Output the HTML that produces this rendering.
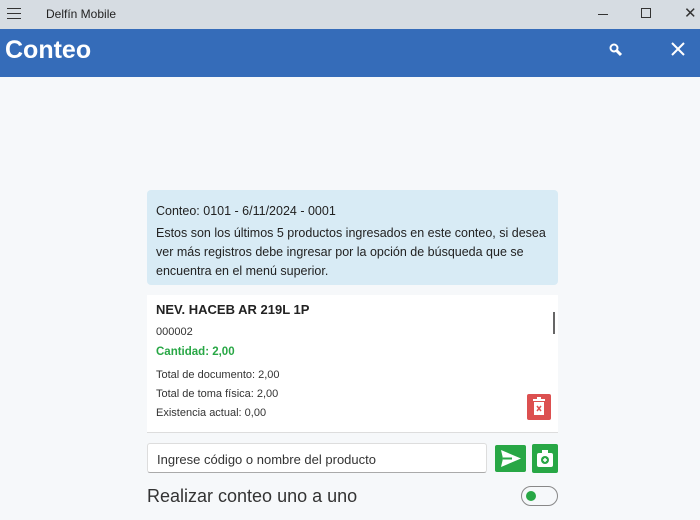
<!DOCTYPE html>
<html><head><meta charset="utf-8"><style>
*{margin:0;padding:0;box-sizing:border-box}
body{width:700px;height:520px;overflow:hidden;background:#f6f8fa;font-family:"Liberation Sans",sans-serif;position:relative}
.abs{position:absolute}
</style></head><body>
<div class="abs" style="left:0;top:0;width:700px;height:29px;background:#d6dce2"></div>
<div class="abs" style="left:7px;top:8px;width:14px;height:1px;background:#333;box-shadow:0 5px 0 #333,0 10px 0 #333"></div>
<div class="abs" style="left:46px;top:7px;font-size:12px;color:#222">Delfín Mobile</div>
<div class="abs" style="left:598px;top:14px;width:10px;height:1px;background:#333"></div>
<div class="abs" style="left:641px;top:8px;width:10px;height:10px;border:1px solid #333"></div>
<div class="abs" style="left:684px;top:4px;font-size:15px;color:#333">✕</div>
<div class="abs" style="left:0;top:29px;width:700px;height:48px;background:#356cb9"></div>
<div class="abs" style="left:5px;top:36px;font-size:25px;font-weight:bold;color:#fff">Conteo</div>
<svg class="abs" style="left:608px;top:42px" width="16" height="16" viewBox="0 0 16 16"><circle cx="6" cy="6" r="3.5" fill="none" stroke="#fff" stroke-width="2"/><path d="M8.5 8.5L13 13" stroke="#fff" stroke-width="3"/></svg>
<svg class="abs" style="left:671px;top:42px" width="14" height="14" viewBox="0 0 14 14"><path d="M1 1L13 13M13 1L1 13" stroke="#fff" stroke-width="2"/></svg>
<div class="abs" style="left:147px;top:190px;width:411px;height:95px;background:#d8ebf5;border-radius:4px;padding:12px 9px;font-size:12.5px;color:#222;line-height:19px">
<div style="margin-bottom:3px">Conteo: 0101 - 6/11/2024 - 0001</div>
Estos son los últimos 5 productos ingresados en este conteo, si desea ver más registros debe ingresar por la opción de búsqueda que se encuentra en el menú superior.</div>
<div class="abs" style="left:147px;top:295px;width:411px;height:138px;background:#fff;border-bottom:1px solid #ddd"></div>
<div class="abs" style="left:553px;top:312px;width:2px;height:22px;background:#666"></div>
<div class="abs" style="left:156px;top:302px;font-size:13px;font-weight:bold;color:#222">NEV. HACEB AR 219L 1P</div>
<div class="abs" style="left:156px;top:326px;font-size:11px;color:#333">000002</div>
<div class="abs" style="left:156px;top:346px;font-size:11.5px;font-weight:bold;color:#28a745">Cantidad: 2,00</div>
<div class="abs" style="left:156px;top:366px;font-size:11px;color:#333;line-height:19px">Total de documento: 2,00<br>Total de toma física: 2,00<br>Existencia actual: 0,00</div>
<div class="abs" style="left:527px;top:394px;width:24px;height:26px;background:#dc5050;border-radius:2px"></div>
<svg class="abs" style="left:531px;top:397px" width="16" height="20" viewBox="0 0 16 20"><rect x="2" y="2" width="12" height="2" fill="#fff"/><rect x="6" y="0" width="4" height="2" fill="#fff"/><rect x="3" y="5" width="10" height="13" fill="#fff"/><path d="M6 9L10 14M10 9L6 14" stroke="#dc5050" stroke-width="1.5"/></svg>
<div class="abs" style="left:147px;top:443px;width:340px;height:30px;background:#fff;border:1px solid #ddd;border-bottom:1px solid #aaa;border-radius:3px;padding:8px 9px;font-size:13px;color:#333">Ingrese código o nombre del producto</div>
<div class="abs" style="left:495px;top:445px;width:31px;height:27px;background:#28a745;border-radius:2px"></div>
<svg class="abs" style="left:500px;top:449px" width="22" height="19" viewBox="0 0 22 19"><path d="M1 1L21 9.5L1 18L3 9.5Z" fill="#fff"/><path d="M3 9.5H12" stroke="#28a745" stroke-width="2"/></svg>
<div class="abs" style="left:532px;top:444px;width:26px;height:29px;background:#28a745;border-radius:2px"></div>
<svg class="abs" style="left:536px;top:449px" width="18" height="19" viewBox="0 0 18 19"><rect x="1" y="4" width="16" height="14" rx="2" fill="#fff"/><rect x="6" y="1" width="6" height="4" fill="#fff"/><circle cx="9" cy="11" r="4" fill="#28a745"/><path d="M9 9V13M7 11H11" stroke="#fff" stroke-width="1.5"/></svg>
<div class="abs" style="left:147px;top:486px;font-size:18px;color:#333">Realizar conteo uno a uno</div>
<div class="abs" style="left:521px;top:486px;width:37px;height:20px;border:1px solid #888;border-radius:10px;background:#f6f8fa"></div>
<div class="abs" style="left:526px;top:491px;width:10px;height:10px;border-radius:50%;background:#28a745"></div>
</body></html>
